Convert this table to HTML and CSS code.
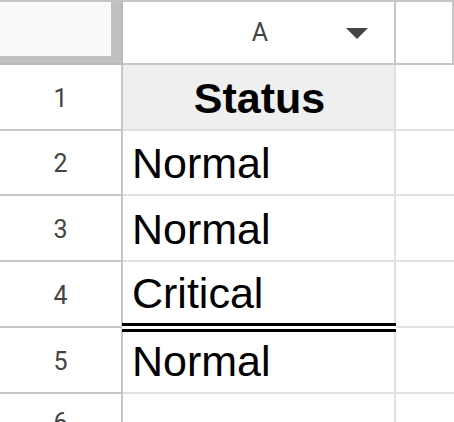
FILE: index.html
```html
<!DOCTYPE html>
<html>
<head>
<meta charset="utf-8">
<link rel="stylesheet" href="styles.css">
</head>
<body>
<div class="sheet">
  <div class="corner"><div class="corner-box"></div></div>
  <div class="colhead"><span></span><span class="col-label">A</span><span class="caret"></span></div>
  <div class="colhead blank"></div>

  <div class="rowhead">1</div>
  <div class="cell title">Status</div>
  <div class="cell blank"></div>

  <div class="rowhead">2</div>
  <div class="cell">Normal</div>
  <div class="cell blank"></div>

  <div class="rowhead">3</div>
  <div class="cell">Normal</div>
  <div class="cell blank"></div>

  <div class="rowhead">4</div>
  <div class="cell double">Critical</div>
  <div class="cell blank"></div>

  <div class="rowhead">5</div>
  <div class="cell">Normal</div>
  <div class="cell blank"></div>

  <div class="rowhead">6</div>
  <div class="cell"></div>
  <div class="cell blank"></div>
</div>
</body>
</html>
```

FILE: styles.css
```css
html, body {
  margin: 0;
  padding: 0;
  background: #ffffff;
  overflow: hidden;
}

.sheet {
  display: grid;
  grid-template-columns: 123px 273px 1fr;
  grid-template-rows: 65px 66px 65px 66px 66px 66px 56px;
  width: 454px;
}

.sheet > div {
  box-sizing: border-box;
}

.corner {
  background: #c0c0c0;
  border-top: 2px solid #c4c4c4;
  border-right: 2px solid #b9b9b9;
  border-bottom: 2px solid #b9b9b9;
}

.corner-box {
  width: 111px;
  height: 54px;
  background: #f8f9fa;
}

.colhead {
  display: grid;
  grid-template-columns: 1fr auto 1fr;
  align-items: center;
  border-top: 2px solid #c4c7c5;
  border-right: 2px solid #c4c7c5;
  border-bottom: 2px solid #c4c7c5;
  background: #ffffff;
  font-family: Roboto, "Liberation Sans", sans-serif;
  font-size: 25px;
  color: #444444;
}

.col-label {
  text-align: center;
  padding-left: 3px;
}

.caret {
  justify-self: end;
  margin-right: 26px;
  margin-top: 2px;
  width: 0;
  height: 0;
  border-left: 11px solid transparent;
  border-right: 11px solid transparent;
  border-top: 11px solid #444444;
}

.rowhead {
  display: flex;
  align-items: center;
  justify-content: center;
  border-right: 2px solid #c4c7c5;
  border-bottom: 2px solid #c4c7c5;
  font-family: Roboto, "Liberation Sans", sans-serif;
  font-size: 25px;
  color: #444444;
  padding-top: 2px;
}

.cell {
  position: relative;
  display: flex;
  align-items: flex-end;
  padding: 0 7px 7px 9px;
  border-right: 2px solid #e1e1e1;
  border-bottom: 2px solid #e1e1e1;
  font-family: "Liberation Sans", Arial, sans-serif;
  font-size: 43px;
  line-height: 48px;
  color: #000000;
  background: #ffffff;
}

.cell.blank {
  border-right: none;
}

.cell.title {
  justify-content: center;
  font-weight: bold;
  background: #efefef;
  padding-left: 2px;
  padding-right: 0;
}

.cell.double {
  padding-bottom: 9px;
}

.cell.double::after {
  content: "";
  position: absolute;
  z-index: 2;
  box-sizing: border-box;
  left: -1px;
  right: -2px;
  bottom: -6px;
  height: 9px;
  border-top: 3px solid #000000;
  border-bottom: 3px solid #000000;
  background: #ffffff;
}
```
